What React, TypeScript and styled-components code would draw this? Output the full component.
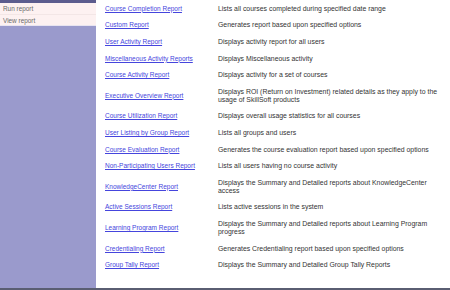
import React from "react";
import styled, { createGlobalStyle } from "styled-components";

const Global = createGlobalStyle`
  html, body { margin: 0; padding: 0; background: #ffffff; }
  body { font-family: "Liberation Sans", Arial, sans-serif; }
`;

const Page = styled.div`
  width: 450px;
  height: 290px;
  display: flex;
  flex-direction: column;
  overflow: hidden;
`;

const Body = styled.div`
  flex: 1;
  display: flex;
  min-height: 0;
`;

const BottomRule = styled.div`
  height: 2px;
  background: #5a5e72;
`;

const Sidebar = styled.div`
  width: 96px;
  flex: none;
  background: #9a9acc;
  display: flex;
  flex-direction: column;
`;

const SideTop = styled.div`
  height: 3px;
  background: #5c5c8e;
`;

const Menu = styled.div`
  display: flex;
  flex-direction: column;
  background: #fdf1f1;
  border-bottom: 1px solid #e8e4f0;
`;

const MenuItem = styled.a`
  display: block;
  height: 11px;
  line-height: 11px;
  padding-left: 3px;
  font-size: 6.4px;
  color: #6a6a6a;
  text-decoration: none;
  & + & { border-top: 1px solid #f3e6e6; height: 10px; }
`;

const Main = styled.div`
  flex: 1;
  padding-top: 0.5px;
  padding-left: 9px;
  padding-right: 3px;
`;

const Row = styled.div`
  display: grid;
  grid-template-columns: 113px 1fr;
  align-items: center;
  padding: 4.3px 0;
`;

const ReportLink = styled.a`
  font-size: 6.5px;
  line-height: 8px;
  color: #4545dd;
  text-decoration: underline;
  white-space: nowrap;
`;

const Desc = styled.div`
  font-size: 6.9px;
  line-height: 8px;
  color: #333333;
`;

const reports: [string, string][] = [
  ["Course Completion Report", "Lists all courses completed during specified date range"],
  ["Custom Report", "Generates report based upon specified options"],
  ["User Activity Report", "Displays activity report for all users"],
  ["Miscellaneous Activity  Reports", "Displays Miscellaneous activity"],
  ["Course Activity Report", "Displays activity for a set of courses"],
  [
    "Executive Overview Report",
    "Displays ROI (Return on Investment) related details as they apply to the usage of SkillSoft products",
  ],
  ["Course Utilization Report", "Displays overall usage statistics for all courses"],
  ["User Listing by Group Report", "Lists all groups and users"],
  ["Course Evaluation Report", "Generates the course evaluation report based upon specified options"],
  ["Non-Participating Users Report", "Lists all users having no course activity"],
  ["KnowledgeCenter Report", "Displays the Summary and Detailed reports about KnowledgeCenter access"],
  ["Active Sessions Report", "Lists active sessions in the system"],
  [
    "Learning Program Report",
    "Displays the Summary and Detailed reports about Learning Program progress",
  ],
  ["Credentialing Report", "Generates Credentialing report based upon specified options"],
  ["Group Tally Report", "Displays the Summary and Detailed Group Tally Reports"],
];

export default function App() {
  return (
    <>
      <Global />
      <Page>
        <Body>
          <Sidebar>
            <SideTop />
            <Menu>
              <MenuItem href="#">Run report</MenuItem>
              <MenuItem href="#">View report</MenuItem>
            </Menu>
          </Sidebar>
          <Main>
            {reports.map(([name, desc]) => (
              <Row key={name}>
                <ReportLink href="#">{name}</ReportLink>
                <Desc>{desc}</Desc>
              </Row>
            ))}
          </Main>
        </Body>
        <BottomRule />
      </Page>
    </>
  );
}
